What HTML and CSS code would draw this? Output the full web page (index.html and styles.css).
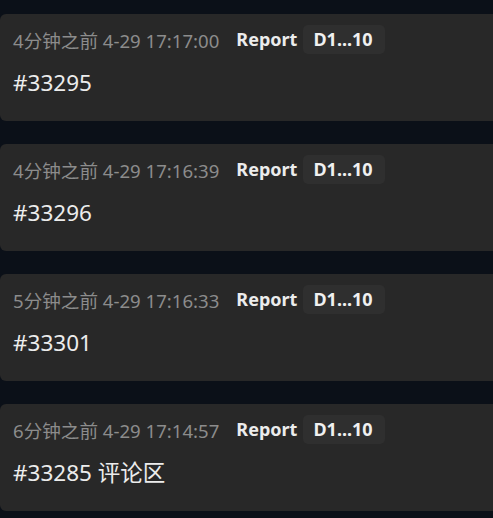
FILE: index.html
```html
<!DOCTYPE html>
<html lang="zh">
<head>
<meta charset="utf-8">
<link rel="stylesheet" href="styles.css">
</head>
<body>
<div class="list">
  <div class="card">
    <div class="meta"><span class="time">4分钟之前 4-29 17:17:00</span><span class="type">Report</span><span class="badge">D1...10</span></div>
    <div class="title">#33295</div>
  </div>
  <div class="card">
    <div class="meta"><span class="time">4分钟之前 4-29 17:16:39</span><span class="type">Report</span><span class="badge">D1...10</span></div>
    <div class="title">#33296</div>
  </div>
  <div class="card">
    <div class="meta"><span class="time">5分钟之前 4-29 17:16:33</span><span class="type">Report</span><span class="badge">D1...10</span></div>
    <div class="title">#33301</div>
  </div>
  <div class="card">
    <div class="meta"><span class="time">6分钟之前 4-29 17:14:57</span><span class="type">Report</span><span class="badge">D1...10</span></div>
    <div class="title">#33285 评论区</div>
  </div>
</div>
</body>
</html>
```
FILE: styles.css
```css
html, body {
  margin: 0;
  padding: 0;
  background: #0b1018;
  overflow: hidden;
}
body {
  font-family: "Noto Sans", "Noto Sans CJK SC", sans-serif;
  width: 493px;
  height: 518px;
}
.list {
  display: flex;
  flex-direction: column;
  gap: 23px;
  padding-top: 14px;
}
.card {
  width: 530px;
  height: 107px;
  box-sizing: border-box;
  background: #282828;
  border-radius: 6px;
  padding: 11px 13px 0 13px;
}
.meta {
  display: flex;
  align-items: center;
  height: 29px;
  line-height: 29px;
}
.time {
  color: #8c8c8c;
  font-size: 18.6px;
  position: relative;
  top: 1px;
}
.type {
  color: #ececec;
  font-size: 18px;
  font-weight: 700;
  margin-left: 17px;
}
.badge {
  color: #f0f0f0;
  font-size: 18px;
  font-weight: 700;
  background: #2f2f2f;
  border-radius: 5px;
  height: 29px;
  line-height: 29px;
  padding: 0 12px 0 10px;
  margin-left: 6px;
}
.title {
  color: #ececec;
  font-size: 22.5px;
  line-height: 30px;
  margin-top: 14px;
}
```
